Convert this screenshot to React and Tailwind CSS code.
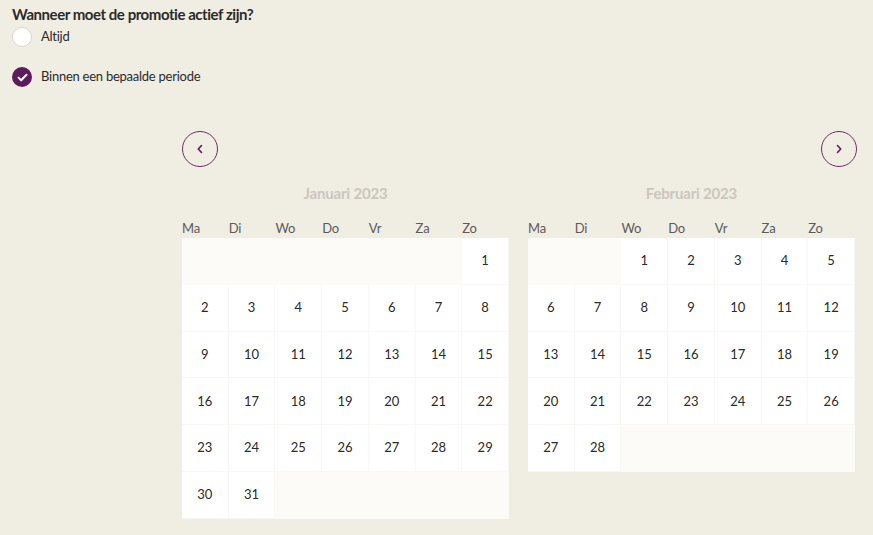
import React, { useState } from "react";

const weekdays = ["Ma", "Di", "Wo", "Do", "Vr", "Za", "Zo"];

const months = [
    { name: "Januari 2023", offset: 6, days: 31 },
    { name: "Februari 2023", offset: 2, days: 28 },
];

const buildCells = (offset, days) => {
    const cells = [];
    for (let i = 0; i < offset; i++) cells.push(null);
    for (let d = 1; d <= days; d++) cells.push(d);
    while (cells.length % 7 !== 0) cells.push(null);
    return cells;
};

const MonthGrid = ({ month }) => {
    const cells = buildCells(month.offset, month.days);

    return (
        <div className="w-[327px]">
            <h2 className="h-[30px] text-center text-[15px] font-bold leading-[30px] tracking-[-0.2px] text-[#cbc7be]">
                {month.name}
            </h2>
            <div className="mt-[12px] grid h-[16px] grid-cols-7 text-[13px] leading-[16px] tracking-[-0.2px] text-[#5b5b5b]">
                {weekdays.map((day) => (
                    <span key={day}>{day}</span>
                ))}
            </div>
            <div className="mt-[2px] grid grid-cols-7">
                {cells.map((day, i) =>
                    day ? (
                        <div
                            key={i}
                            className="flex h-[46.8px] items-center justify-center border-r border-b border-[#f8f7f3] bg-white text-[13px] text-[#2a2a2a]"
                        >
                            {day}
                        </div>
                    ) : (
                        <div key={i} className="h-[46.8px] bg-[#fcfbf8]" />
                    )
                )}
            </div>
        </div>
    );
};

const Radio = ({ checked, label, onClick }) => (
    <button
        type="button"
        onClick={onClick}
        className="flex items-center gap-[9px] text-left"
    >
        {checked ? (
            <span className="flex h-[20px] w-[20px] items-center justify-center rounded-full bg-[#5c1b5b]">
                <svg width="11" height="9" viewBox="0 0 11 9" fill="none">
                    <path
                        d="M1.5 4.6 L4.2 7.2 L9.5 1.8"
                        stroke="white"
                        strokeWidth="2"
                        strokeLinecap="round"
                        strokeLinejoin="round"
                    />
                </svg>
            </span>
        ) : (
            <span className="h-[20px] w-[20px] rounded-full border border-[#d9d6ce] bg-white" />
        )}
        <span className="text-[13px] tracking-[-0.25px] text-[#2b2b2b]">{label}</span>
    </button>
);

const App = () => {
    const [period, setPeriod] = useState(true);

    return (
        <div className="min-h-[535px] w-full bg-[#f0ede3] pl-[12px] pr-[16px] font-['Lato',sans-serif]">
            <h1 className="pt-[3px] text-[15px] font-bold leading-[22px] tracking-[-0.45px] text-[#2b2b2b]">
                Wanneer moet de promotie actief zijn?
            </h1>
            <div className="mt-[2px] flex flex-col gap-[20px]">
                <Radio
                    checked={!period}
                    label="Altijd"
                    onClick={() => setPeriod(false)}
                />
                <Radio
                    checked={period}
                    label="Binnen een bepaalde periode"
                    onClick={() => setPeriod(true)}
                />
            </div>

            {/* kalender */}
            <div className="ml-[170px] mt-[44px]">
                <div className="flex justify-between">
                    <button
                        type="button"
                        className="flex h-[36px] w-[36px] items-center justify-center rounded-full border border-[#6e2e6c]"
                    >
                        <svg width="8" height="10" viewBox="0 0 8 10" fill="none">
                            <path
                                d="M5.5 1.5 L2.3 5 L5.5 8.5"
                                stroke="#5c1b5b"
                                strokeWidth="1.6"
                                strokeLinecap="round"
                                strokeLinejoin="round"
                            />
                        </svg>
                    </button>
                    <button
                        type="button"
                        className="flex h-[36px] w-[36px] items-center justify-center rounded-full border border-[#6e2e6c]"
                    >
                        <svg width="8" height="10" viewBox="0 0 8 10" fill="none">
                            <path
                                d="M2.5 1.5 L5.7 5 L2.5 8.5"
                                stroke="#5c1b5b"
                                strokeWidth="1.6"
                                strokeLinecap="round"
                                strokeLinejoin="round"
                            />
                        </svg>
                    </button>
                </div>
                <div className="mt-[11px] flex gap-[19px]">
                    {months.map((month) => (
                        <MonthGrid key={month.name} month={month} />
                    ))}
                </div>
            </div>
        </div>
    );
};

export default App;
